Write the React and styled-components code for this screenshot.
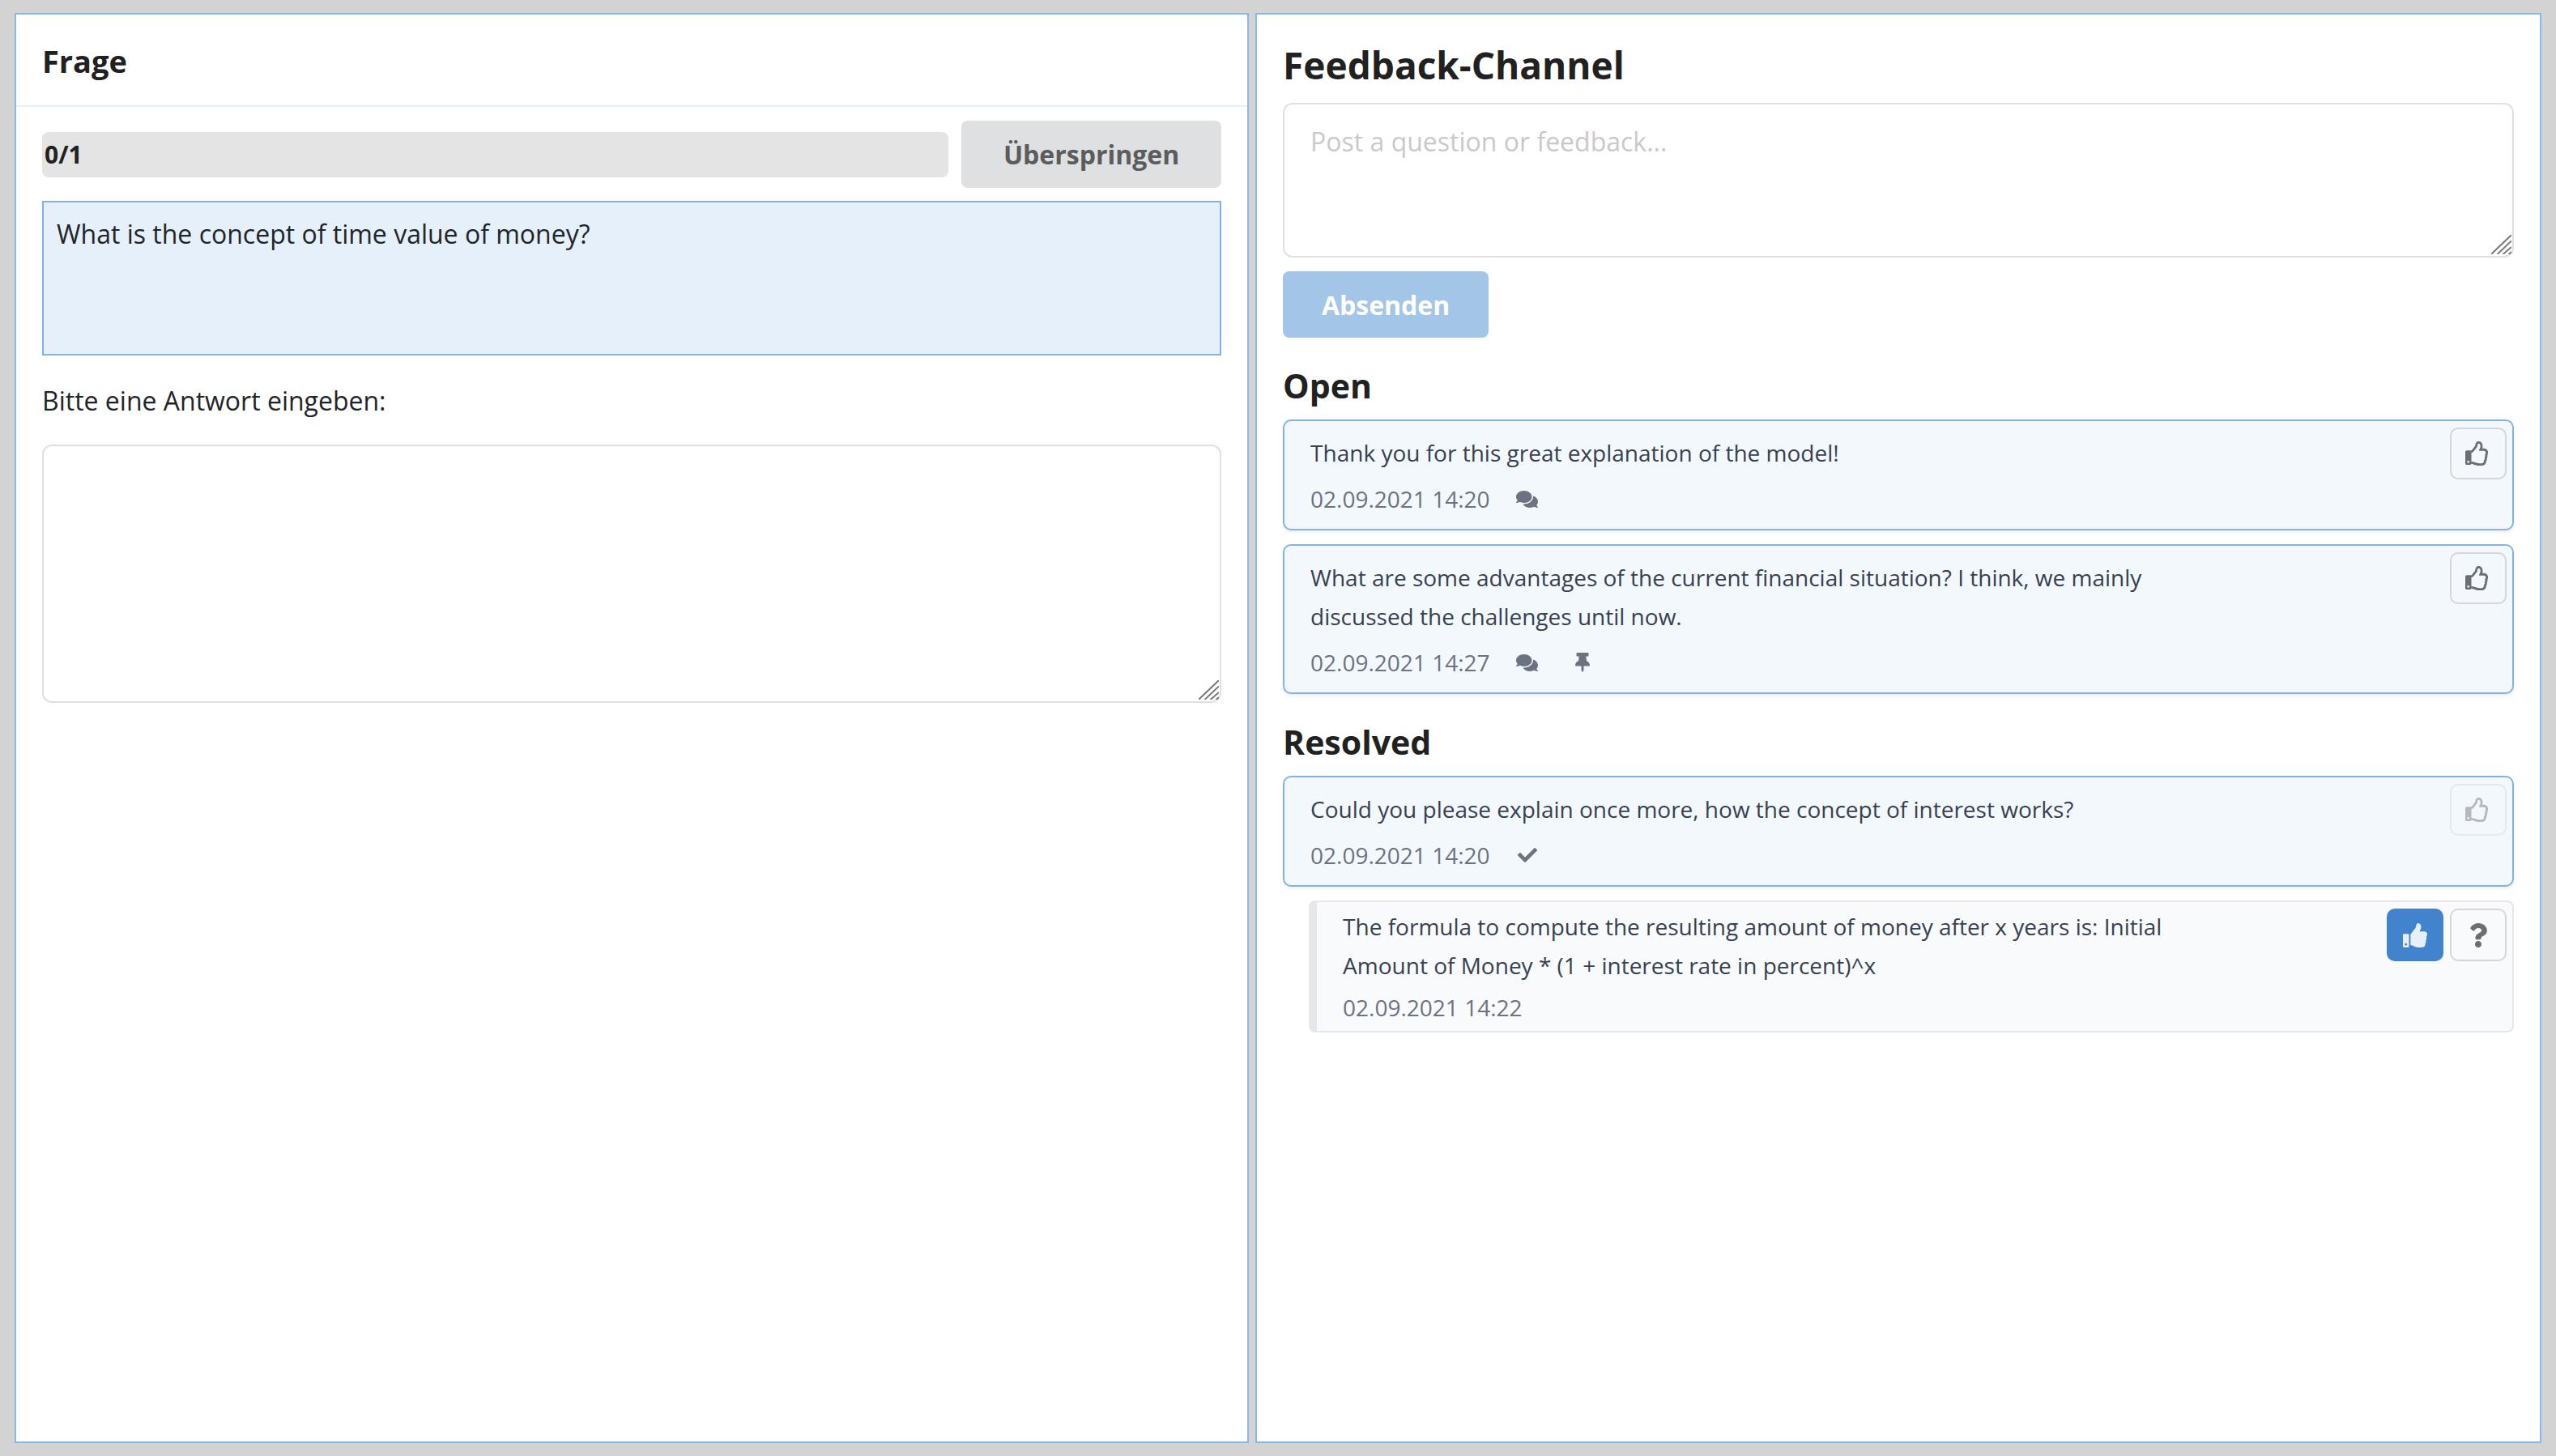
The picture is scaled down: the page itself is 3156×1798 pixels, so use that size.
import React from "react";
import styled, { createGlobalStyle } from "styled-components";
import { FaRegThumbsUp, FaThumbsUp, FaComments, FaThumbtack, FaCheck, FaQuestion } from "react-icons/fa";

const GlobalStyle = createGlobalStyle`
    html, body {
        margin: 0;
        padding: 0;
        background: #d3d3d3;
    }
    * {
        box-sizing: border-box;
    }
`

const Page = styled.div`
    display: flex;
    gap: 8px;
    height: 1798px;
    padding: 16px 18px;
    font-family: "Open Sans", "Liberation Sans", sans-serif;
    font-size: 32px;
    line-height: 48px;
    color: #212529;
`

const Panel = styled.section`
    display: flex;
    flex-direction: column;
    flex: ${props => props.$width} 0 0;
    min-width: 0;
    background: #fff;
    border: 2px solid #8ab8e6;
`

const QuestionHeader = styled.header`
    padding: 30px 32px 28px;
    border-bottom: 2px solid #e6f0fa;
`

const QuestionTitle = styled.h1`
    margin: 0;
    font-size: 38px;
    line-height: 54px;
    font-weight: 700;
    color: #212121;
`

const QuestionBody = styled.div`
    display: flex;
    flex-direction: column;
    padding: 17px 32px;
`

const ProgressRow = styled.div`
    display: flex;
    align-items: center;
    gap: 16px;
`

const Progress = styled.div`
    flex: 1;
    height: 56px;
    padding-left: 3px;
    background: #e4e4e4;
    border-radius: 8px;
    font-size: 30px;
    line-height: 56px;
    font-weight: 700;
    color: #212121;
`

const Button = styled.button`
    border: 0;
    border-radius: 8px;
    font-family: inherit;
    font-size: 32px;
    font-weight: 700;
`

const SkipButton = styled(Button)`
    width: 321px;
    height: 83px;
    background: #dfe0e2;
    color: #5c5c5c;
`

const SendButton = styled(Button)`
    align-self: flex-start;
    width: 254px;
    height: 82px;
    margin-top: 17px;
    background: #a3c6e8;
    color: #fff;
`

const QuestionText = styled.div`
    height: 191px;
    margin-top: 16px;
    padding: 15px 16px;
    background: #e6f0fa;
    border: 2px solid #84b3e3;
`

const AnswerLabel = styled.label`
    margin-top: 32px;
`

const AreaWrap = styled.div`
    position: relative;
    height: ${props => props.$height}px;
    margin-top: ${props => props.$top}px;
`

const Area = styled.textarea`
    display: block;
    width: 100%;
    height: 100%;
    padding: 22px 32px;
    background: #fff;
    border: 2px solid #e0e0e0;
    border-radius: 12px;
    outline: none;
    resize: none;
    font-family: inherit;
    font-size: 32px;
    line-height: 48px;
    color: #212529;

    &::placeholder {
        color: #c9c9c9;
        opacity: 1;
    }
`

const GripIcon = styled.svg`
    position: absolute;
    right: 3px;
    bottom: 4px;
`

const FeedbackBody = styled.div`
    display: flex;
    flex-direction: column;
    padding: 26px 32px 24px;
`

const FeedbackTitle = styled.h1`
    margin: 0 0 11px;
    font-size: 46px;
    line-height: 72px;
    font-weight: 700;
    color: #212121;
`

const SectionTitle = styled.h2`
    margin: 29px 0 12px;
    font-size: 41px;
    line-height: 60px;
    font-weight: 700;
    color: #212121;
`

const Card = styled.article`
    display: flex;
    justify-content: space-between;
    align-items: flex-start;
    padding: 8px 7px 13px 32px;
    background: #f3f8fc;
    border: 2px solid #84b3e3;
    border-radius: 10px;
    box-shadow: 0 2px 4px rgba(0, 0, 0, 0.08);
    & + & {
        margin-top: 17px;
    }
`

const AnswerCard = styled.article`
    display: flex;
    justify-content: space-between;
    align-items: flex-start;
    margin-top: 17px;
    margin-left: 32px;
    padding: 8px 7px 9px 32px;
    background: #f9fafb;
    border: 2px solid #e5e7eb;
    border-left-width: 10px;
    border-radius: 8px;
`

const CardContent = styled.div`
    margin-top: ${props => props.$top}px;
`

const Message = styled.p`
    margin: 0;
    max-width: ${props => props.$max}px;
    font-size: 28px;
    line-height: 48px;
    color: #374151;
`

const Meta = styled.div`
    display: flex;
    align-items: center;
    margin-top: ${props => props.$top}px;
    font-size: 28px;
    line-height: ${props => props.$line}px;
    color: #6b7280;
`

const MetaIcon = styled.span`
    display: flex;
    justify-content: center;
    width: 36px;
    margin-left: 28px;
    color: #6b7280;
    & + & {
        margin-left: 32px;
    }
`

const Actions = styled.div`
    display: flex;
    gap: 8px;
`

const IconButton = styled.button`
    display: flex;
    align-items: center;
    justify-content: center;
    width: 70px;
    height: ${props => props.$height}px;
    padding: 0;
    background: ${props => props.$active ? "#4183cc" : "transparent"};
    border: ${props => props.$active ? "0" : "2px solid #d4d6d9"};
    border-radius: 10px;
    color: ${props => props.$active ? "#e6f0fa" : "#6b6e72"};
    opacity: ${props => props.$faded ? 0.45 : 1};
`

const LikeButton = styled(IconButton)`
    padding-right: 2px;
`

const Grip = () => (
    <GripIcon width="25" height="24" viewBox="0 0 25 24" fill="none" stroke="#7a7a7a" strokeWidth="2">
        <path d="M0 24L25 0M7.5 24L25 7.5M14.5 24L25 15M21.5 24L25 21" />
    </GripIcon>
)

const ThumbButton = ({ faded }) => (
    <LikeButton type="button" $height={64} $faded={faded}>
        <FaRegThumbsUp size={30} />
    </LikeButton>
)

const App = () => {
    return (
        <Page>
            <GlobalStyle />
            <Panel $width={1524}>
                <QuestionHeader>
                    <QuestionTitle>Frage</QuestionTitle>
                </QuestionHeader>
                <QuestionBody>
                    <ProgressRow>
                        <Progress>0/1</Progress>
                        <SkipButton type="button">Überspringen</SkipButton>
                    </ProgressRow>
                    <QuestionText>What is the concept of time value of money?</QuestionText>
                    <AnswerLabel>Bitte eine Antwort eingeben:</AnswerLabel>
                    <AreaWrap $height={319} $top={30}>
                        <Area />
                        <Grip />
                    </AreaWrap>
                </QuestionBody>
            </Panel>
            <Panel $width={1588}>
                <FeedbackBody>
                    <FeedbackTitle>Feedback-Channel</FeedbackTitle>
                    <AreaWrap $height={191} $top={0}>
                        <Area placeholder="Post a question or feedback..." />
                        <Grip />
                    </AreaWrap>
                    <SendButton type="button">Absenden</SendButton>

                    <SectionTitle>Open</SectionTitle>
                    <Card>
                        <CardContent $top={7}>
                            <Message $max={1100}>Thank you for this great explanation of the model!</Message>
                            <Meta $top={9} $line={48}>
                                02.09.2021 14:20
                                <MetaIcon><FaComments size={27} /></MetaIcon>
                            </Meta>
                        </CardContent>
                        <ThumbButton />
                    </Card>
                    <Card>
                        <CardContent $top={7}>
                            <Message $max={1100}>
                                What are some advantages of the current financial situation? I think, we mainly discussed the challenges until now.
                            </Message>
                            <Meta $top={9} $line={48}>
                                02.09.2021 14:27
                                <MetaIcon><FaComments size={27} /></MetaIcon>
                                <MetaIcon><FaThumbtack size={24} /></MetaIcon>
                            </Meta>
                        </CardContent>
                        <ThumbButton />
                    </Card>

                    <SectionTitle>Resolved</SectionTitle>
                    <Card>
                        <CardContent $top={7}>
                            <Message $max={1100}>Could you please explain once more, how the concept of interest works?</Message>
                            <Meta $top={9} $line={48}>
                                02.09.2021 14:20
                                <MetaIcon><FaCheck size={24} /></MetaIcon>
                            </Meta>
                        </CardContent>
                        <ThumbButton faded />
                    </Card>
                    <AnswerCard>
                        <CardContent $top={-2}>
                            <Message $max={1060}>
                                The formula to compute the resulting amount of money after x years is: Initial Amount of Money * (1 + interest rate in percent)^x
                            </Message>
                            <Meta $top={8} $line={40}>02.09.2021 14:22</Meta>
                        </CardContent>
                        <Actions>
                            <IconButton type="button" $height={65} $active>
                                <FaThumbsUp size={30} />
                            </IconButton>
                            <IconButton type="button" $height={65}>
                                <FaQuestion size={30} />
                            </IconButton>
                        </Actions>
                    </AnswerCard>
                </FeedbackBody>
            </Panel>
        </Page>
    )
}

export default App;
